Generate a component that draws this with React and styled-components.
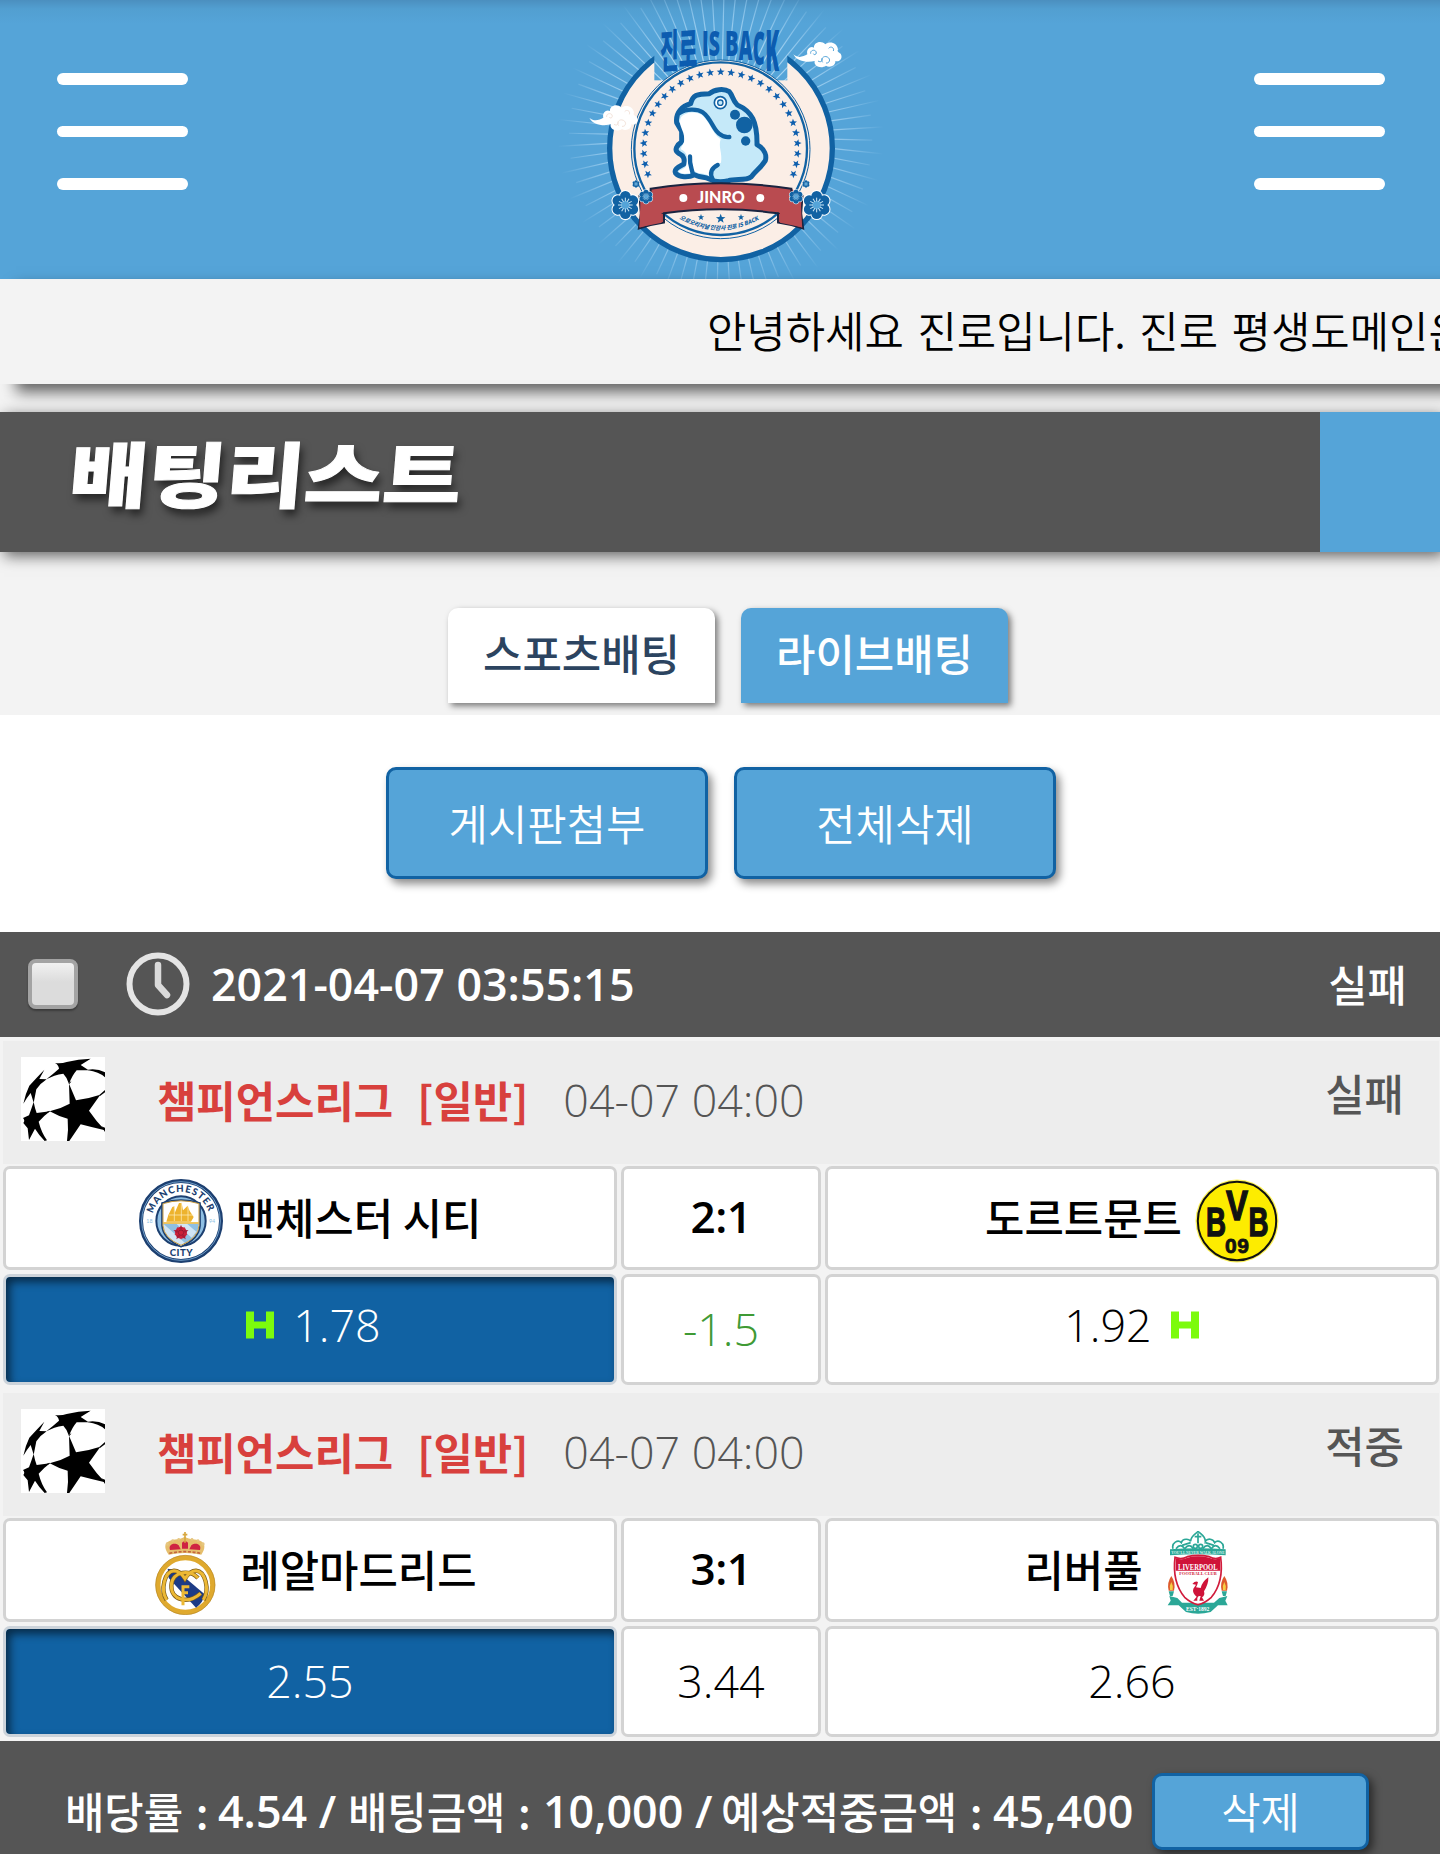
import React from "react";
import styled, { createGlobalStyle, css } from "styled-components";

const matches = [
  {
    league: "챔피언스리그",
    kind: "[일반]",
    date: "04-07 04:00",
    status: "실패",
    home: "맨체스터 시티",
    away: "도르트문트",
    score: "2:1",
    homeLogo: "city",
    awayLogo: "bvb",
    odds: ["1.78", "-1.5", "1.92"],
    handicap: true,
  },
  {
    league: "챔피언스리그",
    kind: "[일반]",
    date: "04-07 04:00",
    status: "적중",
    home: "레알마드리드",
    away: "리버풀",
    score: "3:1",
    homeLogo: "real",
    awayLogo: "liverpool",
    odds: ["2.55", "3.44", "2.66"],
    handicap: false,
  },
];

const NAVY = "#1162a3";

// letters of the logo title hang from one line and grow along the ring
const logoLetters = [
  { text: "IS", x: 456, base: 169, stretch: 1.2, width: 54 },
  { text: "B", x: 525, base: 169, stretch: 1.2, width: 41 },
  { text: "A", x: 566, base: 179, stretch: 1.36, width: 41 },
  { text: "C", x: 608, base: 194, stretch: 1.56, width: 36 },
  { text: "K", x: 646, base: 213, stretch: 1.86, width: 42 },
];

const starPoints = (cx, cy, r, turn = 0) =>
  Array.from({ length: 10 }, (_, i) => {
    const a = ((i * 36 - 90 + turn) * Math.PI) / 180;
    const d = i % 2 ? r * 0.42 : r;
    return `${(cx + Math.cos(a) * d).toFixed(1)},${(cy + Math.sin(a) * d).toFixed(1)}`;
  }).join(" ");

const Flower = ({ x, y, s }) => (
  <g transform={`translate(${x} ${y}) scale(${s})`}>
    {[0, 60, 120, 180, 240, 300].map((a) => (
      <circle
        key={`o${a}`}
        r="19"
        cy="-26"
        fill="#fff"
        transform={`rotate(${a})`}
      />
    ))}
    {[0, 60, 120, 180, 240, 300].map((a) => (
      <circle
        key={a}
        r="16"
        cy="-26"
        fill={NAVY}
        transform={`rotate(${a})`}
      />
    ))}
    <circle r="25" fill={NAVY} />
    <circle r="13" fill="#55a4d8" />
    {Array.from({ length: 12 }, (_, i) => (
      <line
        key={i}
        y1="-11"
        y2="-22"
        stroke="#cfe8f6"
        strokeWidth="3"
        transform={`rotate(${i * 30})`}
      />
    ))}
  </g>
);

const Cloud = ({ x, y, line }) => (
  <g transform={`translate(${x} ${y})`}>
    <path
      d="M0 38C16 52 30 44 42 38C38 22 52 12 62 18C60 2 84 -6 96 8C108 -2 132 2 134 24C130 28 136 32 142 36C150 50 138 62 126 58C128 72 108 80 98 72C84 82 60 74 64 58C44 64 10 60 0 38Z"
      fill="#fff"
    />
    <g fill="none" stroke={line} strokeWidth="3">
      <path d="M52 36c-2-10 12-14 16-6s-6 12-8 6M88 62c-8-8 2-22 14-16s6 20-4 18" />
      <path d="M106 20c6-8 18-2 14 8M74 58c10 6 14-2 12-8" />
    </g>
  </g>
);

const JinroLogo = () => (
  <LogoSvg viewBox="0 0 1020 837">
    <defs>
      <mask id="notch">
        <rect width="1020" height="840" fill="#fff" />
        <rect x="313" y="60" width="399" height="181" fill="#000" />
      </mask>
      <radialGradient
        id="fade"
        gradientUnits="userSpaceOnUse"
        cx="512"
        cy="410"
        r="490"
      >
        <stop offset="0.55" stopColor="#a9d5f2" />
        <stop offset="0.75" stopColor="#8cc4ea" />
        <stop offset="1" stopColor="#8cc4ea" stopOpacity="0" />
      </radialGradient>
      <path id="arc" d="M388 656Q512 726 640 652" />
    </defs>
    <g stroke="url(#fade)" strokeWidth="3.5">
      {Array.from({ length: 76 }, (_, i) => {
        const a = ((i * 4.737 + 1.3) * Math.PI) / 180;
        const end = i % 2 ? 490 : 455;
        return (
          <line
            key={i}
            x1={512 + Math.cos(a) * 200}
            y1={410 + Math.sin(a) * 200}
            x2={512 + Math.cos(a) * end}
            y2={410 + Math.sin(a) * end}
          />
        );
      })}
    </g>
    <circle
      cx="513"
      cy="445"
      r="334"
      fill="#fbeee6"
      stroke={NAVY}
      strokeWidth="16"
      mask="url(#notch)"
    />
    <circle cx="512" cy="448" r="268" fill="#fbeee6" stroke={NAVY} strokeWidth="3" />
    <circle cx="512" cy="446" r="259" fill="none" stroke={NAVY} strokeWidth="7" />
    <g fill="#0e5fae">
      {Array.from({ length: 29 }, (_, i) => {
        const deg = (i - 14) * 7.79;
        const a = ((deg - 90) * Math.PI) / 180;
        return (
          <polygon
            key={i}
            points={starPoints(
              512 + Math.cos(a) * 231,
              447 + Math.sin(a) * 231,
              12.5,
              deg
            )}
          />
        );
      })}
    </g>
    <g fontFamily="'Noto Sans CJK KR', sans-serif" fontWeight="900" fill="#0c5cb0">
      <text
        transform="translate(330 205) skewY(-4) scale(1 1.24)"
        fontSize="110"
        textLength="112"
        lengthAdjust="spacingAndGlyphs"
      >
        진로
      </text>
    </g>
    <g
      fontFamily="'Open Sans', sans-serif"
      fontWeight="800"
      fontSize="90"
      fill="#0c5cb0"
    >
      {logoLetters.map((l) => (
        <text
          key={l.text}
          transform={`translate(${l.x} ${l.base}) scale(1 ${l.stretch})`}
          textLength={l.width}
          lengthAdjust="spacingAndGlyphs"
        >
          {l.text}
        </text>
      ))}
    </g>
    <path
      d="M395 394L380 368C376 336 398 318 422 311C428 286 440 281 478 281C492 268 522 264 538 275C548 286 548 302 562 315C606 334 622 366 621 434C646 448 650 468 646 482C632 504 618 512 604 530C586 544 556 534 536 542C512 548 494 546 480 538C462 528 446 534 434 524C414 534 388 532 377 520C370 506 388 500 402 492C404 476 402 468 386 460C370 450 382 434 395 426Z"
      fill="#c5e9f9"
      stroke={NAVY}
      strokeWidth="15"
      strokeLinejoin="round"
    />
    <path
      d="M392 354C400 336 440 332 456 345C480 366 484 396 512 418C504 440 518 460 513 488C494 492 478 508 480 528C460 518 448 524 434 514C414 524 392 524 386 514C400 506 410 504 410 490C414 468 410 456 392 448C396 434 404 428 403 416C402 388 384 378 392 354Z"
      fill="#fff"
    />
    <g fill="none" stroke={NAVY} strokeWidth="13" strokeLinecap="round">
      <path d="M389 339C408 326 442 326 458 337C482 354 490 388 506 400Q522 413 538 411" />
      <path d="M420 469C418 492 424 502 428 520M503 495C484 504 478 520 488 538" />
    </g>
    <circle cx="511" cy="308" r="18" fill="#fff" stroke={NAVY} strokeWidth="5" />
    <circle cx="511" cy="308" r="8" fill="#c5e9f9" stroke={NAVY} strokeWidth="4" />
    <g fill={NAVY}>
      <circle cx="555" cy="344" r="15" />
      <circle cx="583" cy="375" r="25" />
      <circle cx="587" cy="423" r="14" />
    </g>
    <path
      d="M268 588L302 580V646L342 638V668Q300 674 266 686L272 640ZM758 588L724 580V646L684 638V668Q726 674 760 686L754 640Z"
      fill="#b5474c"
      stroke="#1a2440"
      strokeWidth="5"
    />
    <path
      d="M302 565Q512 534 724 565L752 590L756 682L690 668V639Q512 616 335 639V668L268 682L272 592L302 586Z"
      fill="#b94b50"
    />
    <path
      d="M302 586V566Q512 534 724 566V586M342 668V640Q512 616 684 640V668"
      fill="none"
      stroke="#1a2440"
      strokeWidth="6"
    />
    <circle cx="400" cy="594" r="12" fill="#fff" />
    <circle cx="631" cy="594" r="12" fill="#fff" />
    <text
      x="442"
      y="608"
      fontFamily="Lato, sans-serif"
      fontWeight="900"
      fontSize="50"
      fill="#fff"
      textLength="142"
      lengthAdjust="spacingAndGlyphs"
    >
      JINRO
    </text>
    <g fill={NAVY}>
      <polygon points={starPoints(453, 652, 10)} />
      <polygon points={starPoints(512, 656, 15)} />
      <polygon points={starPoints(573, 652, 10)} />
    </g>
    <text
      fontFamily="'Noto Sans CJK KR', sans-serif"
      fontWeight="900"
      fontSize="17"
      fontStyle="italic"
      fill={NAVY}
    >
      <textPath href="#arc" textLength="250">
        으로오리지널 인감사 진로 IS BACK
      </textPath>
    </text>
    <Cloud x={730} y={125} line="#55a4d8" />
    <Cloud x={118} y={315} line="#f3e3da" />
    <Flower x={226} y={615} s={1} />
    <Flower x={288} y={590} s={0.5} />
    <Flower x={258} y={552} s={0.27} />
    <Flower x={800} y={615} s={1} />
    <Flower x={738} y={590} s={0.5} />
    <Flower x={768} y={552} s={0.27} />
  </LogoSvg>
);

const LeagueBall = () => (
  <BallSvg viewBox="33 20 252 252">
    <rect x="33" y="20" width="252" height="252" fill="#fff" />
    <path d="M135 38Q155 40 170 35Q205 26 242 25L212 44L236 60L200 60Q186 76 177 101Q172 82 160 70Q132 74 109 87Q130 70 147 55Q146 44 135 38Z" />
    <path d="M177 100L198 150Q235 145 271 133L237 181Q258 212 285 240Q250 232 212 222L178 272L171 272Q176 240 173 205Q145 198 119 183Q150 176 179 160Z" />
    <path d="M103 58L88 86L110 87Q90 100 79 117L71 157Q66 140 62 128Q52 140 40 160Q46 130 58 106Q78 84 103 58Z" />
    <path d="M71 155Q74 172 80 188L120 183Q100 198 86 214Q94 246 111 270L104 272Q88 256 75 235L57 269L53 234L40 218Q46 210 39 203L57 195Q64 176 71 155Z" />
    <path d="M234 58Q262 54 285 66V81Q266 64 234 60ZM268 134L285 119V126L270 137ZM274 228L285 232V245Z" />
    <path d="M178 100L182 94M119 183L108 187" stroke="#000" strokeWidth="3" />
  </BallSvg>
);

const CityCrest = () => (
  <CrestSvg viewBox="0 0 252 252" $top={7}>
    <defs>
      <path id="cityTop" d="M39 126A87 87 0 0 1 213 126" />
    </defs>
    <circle cx="126" cy="126" r="120" fill="#fff" stroke="#1c3f70" strokeWidth="12" />
    <circle cx="126" cy="126" r="118" fill="none" stroke="#7fb0d8" strokeWidth="2.5" />
    <circle cx="126" cy="126" r="74" fill="#8fbfe3" stroke="#1c3f70" strokeWidth="6" />
    <path d="M69 72Q126 54 183 72V140Q180 180 126 203Q72 180 69 140Z" fill="#fff" stroke="#1c3f70" strokeWidth="5" />
    <path d="M73 134H179Q178 176 126 198Q74 176 73 134Z" fill="#8fbfe3" />
    <path d="M73 134L138 192L126 198Q74 176 73 134ZM112 134L158 176L172 158L144 134Z" fill="#fff" opacity=".6" />
    <path d="M72 74Q126 57 180 74V140Q178 177 126 199Q74 177 72 140Z" fill="none" stroke="#c99b3f" strokeWidth="3" />
    <path d="M82 128L88 108L100 84L106 82L108 100L120 72H128L132 94L146 80L152 96L164 114L156 128ZM86 112L164 118" fill="#edb32e" />
    <path d="M90 108L164 108M106 84V126M127 70V126M147 80V126" stroke="#fff3c8" strokeWidth="2" />
    <path d="M73 132H179" stroke="#edb32e" strokeWidth="4" />
    <circle cx="126" cy="161" r="18" fill="#cb2039" />
    <polygon points={starPoints(126, 161, 24)} fill="#a81c38" />
    <polygon points={starPoints(126, 161, 21, 36)} fill="#cb2039" />
    <circle cx="126" cy="161" r="8" fill="none" stroke="#7d1730" strokeWidth="2" />
    <g fontFamily="Lato, sans-serif" fontWeight="900" fill="#1c3f70">
      <text fontSize="29">
        <textPath href="#cityTop" startOffset="22" textLength="222">
          MANCHESTER
        </textPath>
      </text>
      <text x="92" y="230" fontSize="29" textLength="69">
        CITY
      </text>
    </g>
    <g fontFamily="Lato, sans-serif" fontSize="16" fill="#8fbfe3">
      <text x="22" y="132">18</text>
      <text x="210" y="132">94</text>
    </g>
  </CrestSvg>
);

const BvbCrest = () => (
  <CrestSvg viewBox="0 0 84 84" $top={6}>
    <circle cx="42" cy="42" r="41.5" fill="#fdf25a" />
    <circle cx="42" cy="42" r="39.2" fill="#fdec00" stroke="#111" strokeWidth="2" />
    <g fontFamily="'Liberation Sans', sans-serif" fontWeight="700" fill="#111" stroke="#111">
      <text x="11" y="56.5" fontSize="40" strokeWidth="1.4" textLength="20" lengthAdjust="spacingAndGlyphs">B</text>
      <text x="53.5" y="56.5" fontSize="40" strokeWidth="1.4" textLength="20" lengthAdjust="spacingAndGlyphs">B</text>
      <text x="31" y="41" fontSize="42" strokeWidth="1.4" textLength="22" lengthAdjust="spacingAndGlyphs">V</text>
      <text x="30" y="73.5" fontSize="21" strokeWidth=".8" textLength="24">09</text>
    </g>
  </CrestSvg>
);

const RealCrest = () => (
  <CrestSvg viewBox="41 65 252 252" $top={6}>
    <path d="M118 136C104 116 104 100 122 94C134 88 152 92 166 82C182 92 200 88 212 94C230 102 228 118 216 136Q167 126 118 136Z" fill="#e6bf6d" />
    <path d="M122 122C116 106 134 98 148 108L154 120ZM212 122C218 106 200 98 186 108L180 120ZM158 118V100Q167 92 176 100V118Z" fill="#cf2442" />
    <path d="M167 68V100M160 76H174" stroke="#d8a840" strokeWidth="5" />
    <path d="M120 132Q167 122 214 132" fill="none" stroke="#c4653c" strokeWidth="5" strokeDasharray="9 5" />
    <g fill="#e6c680">
      <circle cx="114" cy="104" r="5" />
      <circle cx="130" cy="94" r="4" />
      <circle cx="148" cy="90" r="4" />
      <circle cx="188" cy="90" r="4" />
      <circle cx="206" cy="94" r="4" />
      <circle cx="221" cy="104" r="5" />
    </g>
    <circle cx="168" cy="227" r="82" fill="#fff" stroke="#dfa92e" strokeWidth="15" />
    <path d="M115 178L140 182L226 255Q222 280 200 295L118 206Z" fill="#1c3b86" />
    <g fill="none" stroke="#7b5b1c" strokeWidth="13">
      <path d="M112 272C92 240 106 186 134 184Q152 184 167 208Q182 184 200 184C228 186 242 240 222 272" />
      <path d="M206 206C184 180 128 184 126 228C124 272 176 286 214 252" />
    </g>
    <g fill="none" stroke="#ecb834" strokeWidth="9">
      <path d="M112 272C92 240 106 186 134 184Q152 184 167 208Q182 184 200 184C228 186 242 240 222 272" />
      <path d="M206 206C184 180 128 184 126 228C124 272 176 286 214 252" />
      <path d="M161 228V288M158 232H180M161 250H176" />
    </g>
    <circle cx="168" cy="227" r="89" fill="none" stroke="#b58726" strokeWidth="2" />
  </CrestSvg>
);

const LiverpoolCrest = () => (
  <CrestSvg viewBox="526 97 252 252" $top={6}>
    <g fill="none" stroke="#2ba797" strokeWidth="5">
      <path d="M577 150C572 132 592 122 602 132C606 118 626 120 630 128C630 112 646 106 652 98C660 106 674 112 674 128C680 118 698 120 702 132C712 122 732 132 727 150" />
      <path d="M586 150Q600 132 612 150Q626 132 638 150M692 150Q704 132 718 150M666 150Q680 132 692 150M652 104V134M642 114H662M604 140L630 132M700 140L674 132" />
      <circle cx="644" cy="143" r="6" />
      <circle cx="660" cy="143" r="6" />
    </g>
    <path d="M568 152Q652 146 735 152V170Q652 164 568 170Z" fill="#2ba797" />
    <path d="M566 292L590 298L604 312L700 312L716 298L740 292L734 306L741 320L712 320L690 340Q652 350 616 340L594 320L561 320L570 306Z" fill="#2ba797" />
    <path d="M583 176Q602 184 620 174Q652 166 686 174Q704 184 720 176Q730 250 692 296Q672 314 652 318Q632 314 612 296Q574 250 583 176Z" fill="#fff" stroke="#d11c3c" strokeWidth="5" />
    <path d="M585 178Q602 186 620 177Q652 169 686 177Q704 186 718 178L719 216H585Z" fill="#cf1339" />
    <g fontFamily="'Liberation Serif', serif" fontWeight="700">
      <text x="592" y="213" fontSize="24" fill="#fff" textLength="119" lengthAdjust="spacingAndGlyphs">LIVERPOOL</text>
      <text x="596" y="229" fontSize="13" fill="#d11c3c" textLength="112" lengthAdjust="spacingAndGlyphs">FOOTBALL CLUB</text>
      <text x="616" y="337" fontSize="18" fill="#fff" textLength="70" lengthAdjust="spacingAndGlyphs">EST·1892</text>
      <text x="572" y="167" fontSize="13" fill="#d4f2ec" textLength="160" lengthAdjust="spacingAndGlyphs">YOU'LL NEVER WALK ALONE</text>
    </g>
    <path d="M635 256Q644 246 652 250Q650 260 646 266L660 268Q664 250 683 236Q684 256 670 278Q674 290 664 296L670 306H656L660 292Q648 290 650 306H638L648 294Q634 282 638 270L646 258Z" fill="#cf1339" />
    <g id="torch">
      <path d="M564 278H580L576 292H568Z" fill="#2ba797" />
      <path d="M572 232Q586 252 580 276H564Q558 252 572 232Z" fill="#dd5a2c" />
      <path d="M572 250Q579 262 576 274H568Q565 262 572 250Z" fill="#f6cf45" />
    </g>
    <use href="#torch" x="159" />
  </CrestSvg>
);

const crests = {
  city: CityCrest,
  bvb: BvbCrest,
  real: RealCrest,
  liverpool: LiverpoolCrest,
};

const HandicapMark = () => (
  <MarkSvg viewBox="0 0 30 30">
    <path d="M1 1.5H9V11.5H21V1.5H29V28.5H21V18.5H9V28.5H1Z" fill="#7cfb0c" />
  </MarkSvg>
);

const ClockIcon = () => (
  <ClockSvg viewBox="0 0 64 64">
    <circle cx="32" cy="32" r="28.5" fill="none" stroke="#e4e4e4" strokeWidth="6" />
    <path d="M32 13V33L41 43" fill="none" stroke="#dadada" strokeWidth="6.5" strokeLinecap="round" strokeLinejoin="round" />
  </ClockSvg>
);

const Menu = () => (
  <MenuButton>
    <span />
    <span />
    <span />
  </MenuButton>
);

const Match = ({ match }) => {
  const HomeCrest = crests[match.homeLogo];
  const AwayCrest = crests[match.awayLogo];
  return (
    <MatchBlock>
      <LeagueRow>
        <LeagueBall />
        <LeagueName>{match.league}</LeagueName>
        <LeagueKind>{match.kind}</LeagueKind>
        <MatchDate>{match.date}</MatchDate>
        <MatchStatus>{match.status}</MatchStatus>
      </LeagueRow>
      <Cells>
        <TeamCell>
          <HomeCrest />
          <TeamName>{match.home}</TeamName>
        </TeamCell>
        <TeamCell>
          <Score>{match.score}</Score>
        </TeamCell>
        <TeamCell>
          <TeamName>{match.away}</TeamName>
          <AwayCrest />
        </TeamCell>
        <OddsCell $picked $raised={match.handicap}>
          {match.handicap && <HandicapMark />}
          {match.odds[0]}
        </OddsCell>
        <OddsCell $line={match.handicap}>{match.odds[1]}</OddsCell>
        <OddsCell $raised={match.handicap}>
          {match.odds[2]}
          {match.handicap && <HandicapMark />}
        </OddsCell>
      </Cells>
    </MatchBlock>
  );
};

const App = () => {
  return (
    <Page>
      <GlobalStyle />
      <Header>
        <Menu />
        <JinroLogo />
        <Menu />
      </Header>
      <Notice>안녕하세요 진로입니다. 진로 평생도메인은</Notice>
      <TitleBar>
        <Title>배팅리스트</Title>
      </TitleBar>
      <Tabs>
        <Tab>스포츠배팅</Tab>
        <Tab $active>라이브배팅</Tab>
      </Tabs>
      <Actions>
        <ActionButton>게시판첨부</ActionButton>
        <ActionButton>전체삭제</ActionButton>
      </Actions>
      <BetHeader>
        <Checkbox />
        <ClockIcon />
        <BetTime>2021-04-07 03:55:15</BetTime>
        <BetResult>실패</BetResult>
      </BetHeader>
      {matches.map((match) => (
        <Match key={match.home} match={match} />
      ))}
      <BetFooter>
        <FootLabel $width={153}>배당률 :</FootLabel>
        <FootValue $width={130}>4.54 /</FootValue>
        <FootLabel $width={195}>배팅금액 :</FootLabel>
        <FootValue $width={178}>10,000 /</FootValue>
        <FootLabel $width={272}>예상적중금액 :</FootLabel>
        <FootValue $width={159}>45,400</FootValue>
        <DeleteButton>삭제</DeleteButton>
      </BetFooter>
    </Page>
  );
};

const GlobalStyle = createGlobalStyle`
  * {
    box-sizing: border-box;
  }
  body {
    margin: 0;
    background: #f3f3f3;
    overflow: hidden;
  }
`;

const hangul = css`
  font-family: "Noto Sans CJK KR", sans-serif;
  font-size: 42.8px;
  line-height: 60px;
  white-space: nowrap;
`;
const digits = css`
  font-family: "Open Sans", "Noto Sans CJK KR", sans-serif;
  font-size: 44.8px;
  line-height: 60px;
  white-space: nowrap;
`;
const blueButton = css`
  ${hangul}
  font-weight: 350;
  color: #fff;
  background: #55a4d8;
  border: 3px solid #1162a3;
  border-radius: 10px;
  padding: 0 0 3px;
`;
const Page = styled.div`
  width: 1440px;
  height: 1854px;
  overflow: hidden;
  background: #f3f3f3;
`;
const Header = styled.header`
  height: 279px;
  padding: 0 55px 0 57px;
  display: flex;
  justify-content: space-between;
  background: linear-gradient(#4b8fbf, #529fd1 9px, #55a4d8 24px);
`;
const MenuButton = styled.div`
  width: 131px;
  padding-top: 73px;
  display: flex;
  flex-direction: column;
  gap: 41px;
  span {
    height: 11.7px;
    border-radius: 6px;
    background: #fff;
  }
`;
const LogoSvg = styled.svg`
  width: 340px;
  height: 279px;
  margin-left: -2px;
`;
const Notice = styled.div`
  ${hangul}
  position: relative;
  height: 104.5px;
  padding: 20px 0 0 707px;
  font-weight: 350;
  word-spacing: 4px;
  color: #000;
  background: #f3f3f3;
  box-shadow: 16px 8px 14px rgba(0, 0, 0, 0.6);
`;
const TitleBar = styled.div`
  position: relative;
  height: 140px;
  margin-top: 28px;
  padding: 0 0 0 70px;
  background: #555;
  border-right: 120px solid #55a4d8;
  box-shadow: 4px 4px 14px rgba(0, 0, 0, 0.6);
`;
const Title = styled.h1`
  margin: 0;
  font-family: "Noto Sans CJK KR", sans-serif;
  font-size: 71px;
  font-weight: 900;
  line-height: 118px;
  white-space: nowrap;
  color: #fff;
  -webkit-text-stroke: 1px #fff;
  text-shadow: 3px 6px 8px rgba(0, 0, 0, 0.6);
  transform: scaleX(1.2) skewX(-4deg);
  transform-origin: 0 50%;
`;
const Tabs = styled.div`
  height: 163px;
  padding-top: 56.5px;
  display: flex;
  justify-content: center;
  gap: 26px;
  padding-left: 16px;
`;
const Tab = styled.div`
  ${hangul}
  width: 267px;
  height: 95px;
  padding-top: 14px;
  text-align: center;
  font-weight: 500;
  color: ${(props) => (props.$active ? "#fff" : "#2c4460")};
  background: ${(props) => (props.$active ? "#55a4d8" : "#fff")};
  border-radius: 10px 10px 0 0;
  box-shadow: 3px 3px 6px rgba(0, 0, 0, 0.5);
`;
const Actions = styled.div`
  height: 217px;
  padding: 52.5px 0 0 2px;
  display: flex;
  justify-content: center;
  gap: 26px;
  background: #fff;
`;
const ActionButton = styled.button`
  ${blueButton}
  width: 322px;
  height: 112px;
  box-shadow: 4px 5px 9px rgba(0, 0, 0, 0.45);
`;
const BetHeader = styled.div`
  height: 105px;
  padding: 0 33px 0 28px;
  display: flex;
  align-items: center;
  color: #fff;
  background: #555;
`;
const Checkbox = styled.div`
  width: 50px;
  height: 50px;
  border: 4px solid #a3a3a3;
  border-radius: 8px;
  background: linear-gradient(#f1f1f1, #dcdcdc 45%);
  box-shadow: 0 2px 2px rgba(0, 0, 0, 0.3);
`;
const ClockSvg = styled.svg`
  width: 64px;
  height: 64px;
  margin-left: 48px;
`;
const BetTime = styled.span`
  ${digits}
  margin-left: 21px;
  font-weight: 600;
`;
const BetResult = styled.span`
  ${hangul}
  margin: 0 0 2px auto;
  font-weight: 500;
`;
const MatchBlock = styled.section`
  height: 352px;
  padding: 4px 1px 0 3px;
`;
const LeagueRow = styled.div`
  height: 123px;
  padding: 0 35px 0 18px;
  display: flex;
  align-items: center;
  background: #ededed;
`;
const BallSvg = styled.svg`
  width: 84px;
  height: 84px;
  margin-bottom: 6px;
`;
const LeagueName = styled.span`
  ${hangul}
  margin: 0 0 6px 52px;
  font-weight: 700;
  color: #d8403d;
`;
const LeagueKind = styled(LeagueName)`
  margin-left: 24px;
`;
const MatchDate = styled.span`
  ${digits}
  margin: 0 0 4px 35px;
  font-weight: 350;
  color: #555;
`;
const MatchStatus = styled.span`
  ${hangul}
  margin: 0 0 20px auto;
  font-weight: 500;
  color: #555;
`;
const Cells = styled.div`
  margin: 2px 0 0;
  display: grid;
  grid-template-columns: 1fr 200px 1fr;
  grid-template-rows: 104.5px 111px;
  gap: 4px;
`;
const Cell = styled.div`
  display: flex;
  align-items: center;
  justify-content: center;
  background: #fff;
  border: 3px solid #d3d3d3;
  border-radius: 7px;
`;
const TeamCell = styled(Cell)`
  gap: 13px;
`;
const CrestSvg = styled.svg`
  width: 84px;
  height: 84px;
  margin-top: ${(props) => props.$top}px;
`;
const TeamName = styled.span`
  ${hangul}
  margin-bottom: 4px;
  font-weight: 500;
  color: #000;
`;
const Score = styled.span`
  ${digits}
  margin-bottom: 3px;
  font-size: 44px;
  letter-spacing: -0.5px;
  font-weight: 600;
  color: #000;
`;
const OddsCell = styled(Cell)`
  ${digits}
  gap: 18px;
  font-weight: 350;
  padding-bottom: ${(props) => (props.$raised ? 10 : 1)}px;
  color: ${(props) => (props.$line ? "#3f9a35" : "#000")};
  ${(props) =>
    props.$picked &&
    css`
      padding-left: ${props.$raised ? 6 : 0}px;
      color: #fff;
      background: #1162a3;
      border-color: #ccd3da;
      box-shadow: inset 4px 5px 9px rgba(0, 0, 0, 0.55);
    `}
`;
const MarkSvg = styled.svg`
  width: 30px;
  height: 30px;
`;
const BetFooter = styled.footer`
  height: 130px;
  padding: 32px 0 0 65px;
  display: flex;
  align-items: flex-start;
  color: #fff;
  background: #555;
`;
const FootLabel = styled.span`
  ${hangul}
  width: ${(props) => props.$width}px;
  padding-top: 7px;
  font-weight: 500;
  word-spacing: 3px;
`;
const FootValue = styled.span`
  ${digits}
  width: ${(props) => props.$width}px;
  padding-top: 8px;
  font-weight: 600;
`;
const DeleteButton = styled.button`
  ${blueButton}
  width: 217px;
  height: 77px;
  box-shadow: 4px 4px 9px rgba(0, 0, 0, 0.5);
`;

export default App;
